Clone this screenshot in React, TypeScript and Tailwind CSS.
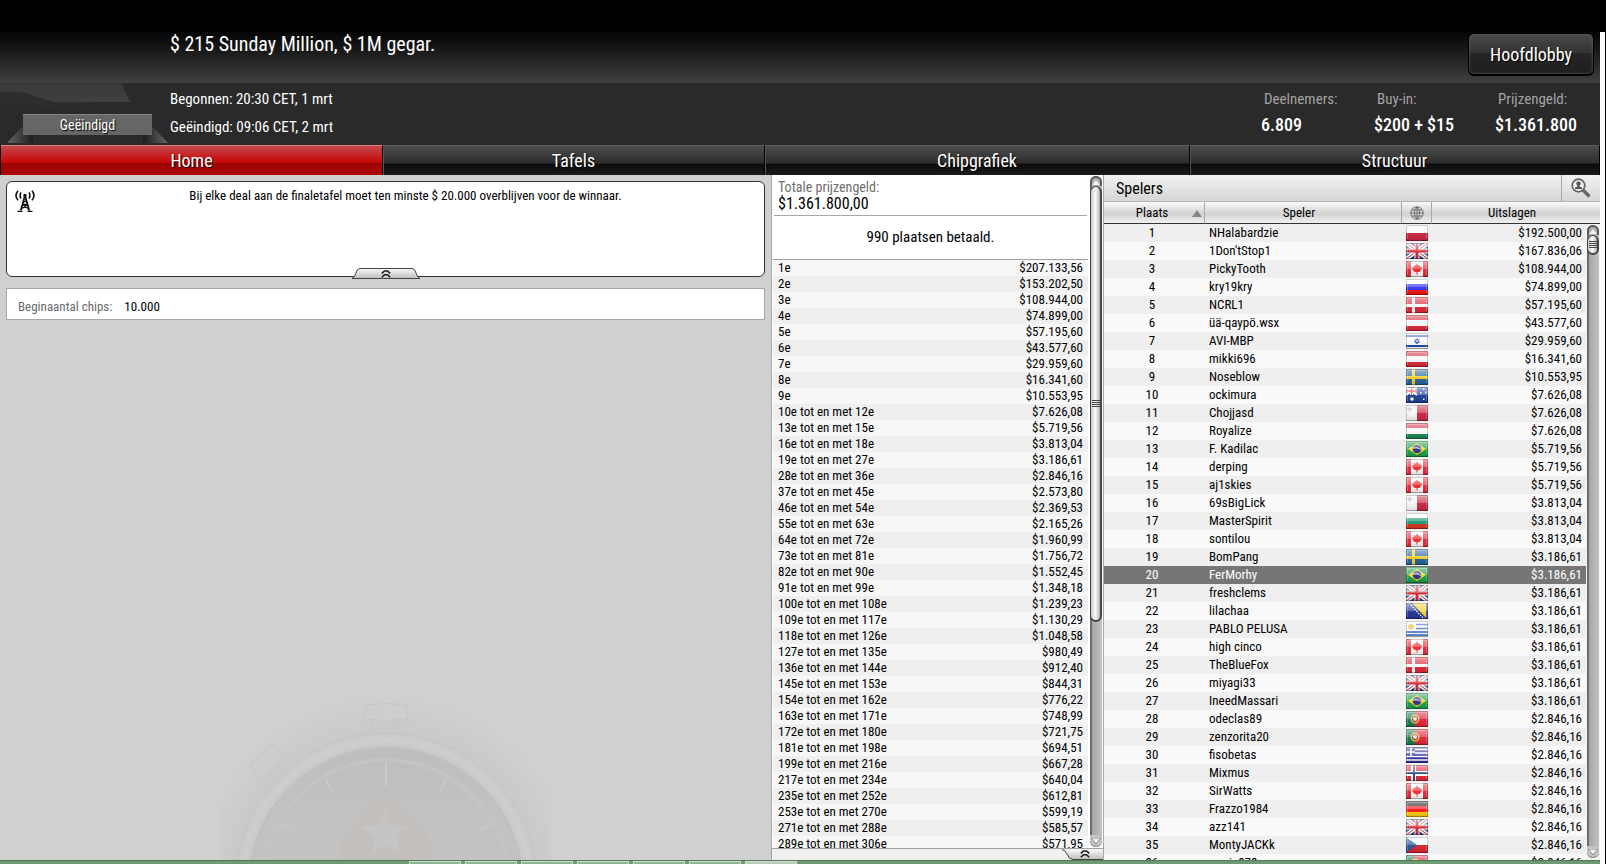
import type { ReactNode } from "react";

const prizes: [string, string][] = [
  ["1e", "207.133,56"], ["2e", "153.202,50"], ["3e", "108.944,00"], ["4e", "74.899,00"],
  ["5e", "57.195,60"], ["6e", "43.577,60"], ["7e", "29.959,60"], ["8e", "16.341,60"],
  ["9e", "10.553,95"], ["10e tot en met 12e", "7.626,08"], ["13e tot en met 15e", "5.719,56"],
  ["16e tot en met 18e", "3.813,04"], ["19e tot en met 27e", "3.186,61"],
  ["28e tot en met 36e", "2.846,16"], ["37e tot en met 45e", "2.573,80"],
  ["46e tot en met 54e", "2.369,53"], ["55e tot en met 63e", "2.165,26"],
  ["64e tot en met 72e", "1.960,99"], ["73e tot en met 81e", "1.756,72"],
  ["82e tot en met 90e", "1.552,45"], ["91e tot en met 99e", "1.348,18"],
  ["100e tot en met 108e", "1.239,23"], ["109e tot en met 117e", "1.130,29"],
  ["118e tot en met 126e", "1.048,58"], ["127e tot en met 135e", "980,49"],
  ["136e tot en met 144e", "912,40"], ["145e tot en met 153e", "844,31"],
  ["154e tot en met 162e", "776,22"], ["163e tot en met 171e", "748,99"],
  ["172e tot en met 180e", "721,75"], ["181e tot en met 198e", "694,51"],
  ["199e tot en met 216e", "667,28"], ["217e tot en met 234e", "640,04"],
  ["235e tot en met 252e", "612,81"], ["253e tot en met 270e", "599,19"],
  ["271e tot en met 288e", "585,57"], ["289e tot en met 306e", "571,95"],
];

const players: [string, string, string][] = [
  ["NHalabardzie", "pl", "192.500,00"], ["1Don'tStop1", "gb", "167.836,06"],
  ["PickyTooth", "ca", "108.944,00"], ["kry19kry", "ru", "74.899,00"],
  ["NCRL1", "dk", "57.195,60"], ["üä-qaypö.wsx", "at", "43.577,60"],
  ["AVI-MBP", "il", "29.959,60"], ["mikki696", "at", "16.341,60"],
  ["Noseblow", "se", "10.553,95"], ["ockimura", "au", "7.626,08"],
  ["Chojjasd", "mt", "7.626,08"], ["Royalize", "hu", "7.626,08"],
  ["F. Kadilac", "br", "5.719,56"], ["derping", "ca", "5.719,56"],
  ["aj1skies", "ca", "5.719,56"], ["69sBigLick", "mt", "3.813,04"],
  ["MasterSpirit", "bg", "3.813,04"], ["sontilou", "ca", "3.813,04"],
  ["BomPang", "se", "3.186,61"], ["FerMorhy", "br", "3.186,61"],
  ["freshclems", "gb", "3.186,61"], ["lilachaa", "ba", "3.186,61"],
  ["PABLO PELUSA", "uy", "3.186,61"], ["high cinco", "ca", "3.186,61"],
  ["TheBlueFox", "dk", "3.186,61"], ["miyagi33", "gb", "3.186,61"],
  ["IneedMassari", "br", "3.186,61"], ["odeclas89", "pt", "2.846,16"],
  ["zenzorita20", "pt", "2.846,16"], ["fisobetas", "gr", "2.846,16"],
  ["Mixmus", "no", "2.846,16"], ["SirWatts", "ca", "2.846,16"],
  ["Frazzo1984", "de", "2.846,16"], ["azz141", "gb", "2.846,16"],
  ["MontyJACKk", "cz", "2.846,16"], ["maria878", "pt", "2.846,16"],
];

const full = (c: string) => <rect width="22" height="16" fill={c} />;
const band = (y: number, h: number, c: string) => <rect y={y} width="22" height={h} fill={c} />;
const col = (x: number, w: number, c: string) => <rect x={x} width={w} height="16" fill={c} />;

const flags: Record<string, ReactNode> = {
  pl: <>{full("#f4f4f4")}{band(8, 8, "#c8203c")}</>,
  gb: (
    <>
      {full("#1d3f8f")}
      <path d="M0 0L22 16M22 0L0 16" stroke="#fff" strokeWidth="4" />
      <path d="M0 0L22 16M22 0L0 16" stroke="#d22a35" strokeWidth="1" />
      <path d="M11 0V16M0 8H22" stroke="#fff" strokeWidth="5" />
      <path d="M11 0V16M0 8H22" stroke="#cc2230" strokeWidth="3" />
    </>
  ),
  ca: (
    <>
      {full("#f6f6f6")}{col(0, 5, "#e02635")}{col(17, 5, "#e02635")}
      <path d="M11 2.500L12.500 4.500L14 4.500L14.500 6L16.500 6.500L15.500 8.500L13.500 11H11.500V13.500H10.500V11H8.500L6.500 8.500L5.500 6.500L7.500 6L8 4.500L9.500 4.500z" fill="#f0252a" />
    </>
  ),
  ru: <>{full("#fff")}{band(5, 6, "#3030f0")}{band(11, 5, "#f01010")}</>,
  dk: <>{full("#dd2233")}{col(6, 3, "#fff")}{band(7, 3, "#fff")}</>,
  at: <>{full("#d82435")}{band(5, 6, "#f8f8f8")}</>,
  il: (
    <>
      {full("#fafafa")}{band(2, 2, "#3a66cc")}{band(12, 2, "#1744a8")}
      <path d="M11 5.500l2.200 3.800H8.800zM11 11L8.800 6.900h4.400z" fill="none" stroke="#2a50b8" strokeWidth=".9" />
    </>
  ),
  se: <>{full("#1f5f98")}{col(6, 3, "#f7c81c")}{band(7, 3, "#f7c81c")}</>,
  au: (
    <>
      {full("#1a3c90")}
      <path d="M0 0L11 8M11 0L0 8" stroke="#fff" strokeWidth="2" />
      <path d="M5.500 0V8M0 4H11" stroke="#fff" strokeWidth="3" />
      <path d="M5.500 0V8M0 4H11" stroke="#d22a35" strokeWidth="1.500" />
      <circle cx="6" cy="12" r="1.800" fill="#fff" />
      <path d="M17 1.500h1.500v1.500H17zM14 5h1.500v1.500H14zM19 4.500h1.500V6H19zM17 11.500h1.500V13H17z" fill="#fff" />
    </>
  ),
  mt: (
    <>
      {full("#f4f4f4")}{col(11, 11, "#c8203c")}
      <path d="M3.500 1.500v5M1 4h5" stroke="#b9a0a0" strokeWidth="1.300" />
    </>
  ),
  hu: <>{full("#f8f8f8")}{band(0, 5, "#d52b3c")}{band(11, 5, "#178050")}</>,
  br: (
    <>
      {full("#159a45")}
      <path d="M11 2l9 6-9 6-9-6z" fill="#f5d818" />
      <circle cx="11" cy="8" r="4.300" fill="#2c2f86" />
      <path d="M7 7q4-1.500 8 1.500" fill="none" stroke="#dfe6f2" strokeWidth=".8" />
    </>
  ),
  bg: <>{full("#f8f8f8")}{band(5, 6, "#1f9a78")}{band(11, 5, "#d5301f")}</>,
  ba: (
    <>
      {full("#1f3292")}
      <path d="M6 0H20V15z" fill="#f5d030" />
      <path d="M3 0L18 16" stroke="#fff" strokeWidth="1.300" strokeDasharray="1.500 1.200" />
    </>
  ),
  uy: (
    <>
      {full("#fafafa")}
      <path d="M10 3.500H22M10 7.500H22M0 11H22M0 14H22" stroke="#2b62c4" strokeWidth="1.700" />
      <circle cx="5" cy="5.500" r="3" fill="#e3bd4c" />
    </>
  ),
  pt: (
    <>
      {full("#de2035")}{col(0, 9, "#12754a")}
      <circle cx="9" cy="8" r="3.800" fill="none" stroke="#e6c840" strokeWidth="1.300" />
      <rect x="7" y="6" width="4" height="4" fill="#f4f4f4" stroke="#cf3b3b" strokeWidth=".7" />
    </>
  ),
  gr: (
    <>
      {full("#2d2d9a")}
      <path d="M9 2.500H22M9 6H22M0 9.500H22M0 13H22" stroke="#fff" strokeWidth="1.500" />
      <rect width="9" height="8" fill="#2d2d9a" />
      <path d="M5 0V9M0 5H9" stroke="#fff" strokeWidth="1.600" />
    </>
  ),
  no: (
    <>
      {full("#e02435")}{col(5, 5, "#fff")}{band(6, 5, "#fff")}{col(7, 2, "#27457e")}{band(7, 2, "#27457e")}
    </>
  ),
  de: <>{full("#fa1414")}{band(0, 5, "#161616")}{band(11, 5, "#f6c800")}</>,
  cz: <>{full("#fafafa")}{band(8, 8, "#d8202c")}<path d="M0 0L11 8L0 16z" fill="#20508f" /></>,
};

function Flag({ code }: { code: string }) {
  return (
    <svg viewBox="0 0 22 16" className="mx-auto block h-4 w-[22px]" aria-hidden="true">
      {flags[code]}
      <rect width="22" height="16" fill="url(#gloss)" />
      <path d="M.5 15.500V.5H21.500V15.500" fill="none" stroke="#000" strokeOpacity=".18" />
      <path d="M0 15.500H22" stroke="#000" strokeOpacity=".3" />
      <path d="M1.500 14V1.500H20.500V14" fill="none" stroke="#fff" strokeOpacity=".22" />
    </svg>
  );
}

function Chevrons() {
  return (
    <svg viewBox="0 0 10 8" className="block h-2 w-[10px]" fill="none" stroke="#1a1a1a" strokeWidth="1.500" aria-hidden="true">
      <path d="M.8 3.400L3.500 1h3L9.200 3.400M.8 7.200L3.500 4.800h3L9.200 7.200" />
    </svg>
  );
}

function ScrollBar({ size }: { size: "long" | "short" }) {
  return (
    <div className="flex h-full w-3 flex-col rounded-full border-l-2 border-[#6b6b6b] bg-gradient-to-r from-[#a6a6a6] to-[#c2c2c2]" aria-hidden="true">
      <div className="-ml-[2px] flex h-[10px] items-center justify-center rounded-t-full border-2 border-b-0 border-[#5b5b5b] bg-[#b0b0b0]">
        <svg viewBox="0 0 8 5" className="h-[5px] w-2"><path d="M0 5L4 0L8 5z" fill="#f2f2f2" /></svg>
      </div>
      <div
        className={
          "-ml-[2px] flex flex-col items-center justify-center gap-px rounded-full border border-r-2 border-b-2 border-[#454545] bg-gradient-to-r from-[#c9c9c9] via-[#fafafa] to-[#b4b4b4] " +
          (size === "long" ? "h-[65%]" : "h-5")
        }
      >
        <i className="h-px w-2 bg-[#444]" />
        <i className="h-px w-2 bg-[#444]" />
        <i className="h-px w-2 bg-[#444]" />
        <i className="h-px w-2 bg-[#444]" />
      </div>
      <div className="-ml-[2px] mt-auto flex h-3 items-center justify-center rounded-b-full border-b border-[#8a8a8a] bg-[#c4c4c4]">
        <svg viewBox="0 0 10 6" className="h-[6px] w-[10px]"><path d="M0 0L5 6L10 0z" fill="#eee" stroke="#777" strokeWidth=".8" /></svg>
      </div>
    </div>
  );
}

function Ribbon() {
  return (
    <div className="relative flex h-full w-[170px] shrink-0 items-start pl-[23px] pt-[31px]">
      <svg viewBox="0 0 170 62" className="absolute left-0 top-0 h-[62px] w-[170px]" aria-hidden="true">
        <defs>
          <linearGradient id="blob" x1="0" y1="0" x2="0" y2="1">
            <stop offset="0" stopColor="#383838" />
            <stop offset="1" stopColor="#404040" />
          </linearGradient>
          <linearGradient id="foldL" x1="0" y1="0" x2="1" y2="0">
            <stop offset="0" stopColor="#666" />
            <stop offset="1" stopColor="#1c1c1c" />
          </linearGradient>
          <linearGradient id="foldR" x1="1" y1="0" x2="0" y2="0">
            <stop offset="0" stopColor="#666" />
            <stop offset="1" stopColor="#1c1c1c" />
          </linearGradient>
        </defs>
        <path d="M0 0H122Q125 12 131 19H54L34 13Q28 10 20 9H0z" fill="url(#blob)" />
        <path d="M0 9H20Q34 14 54 19H96Q60 24 30 22T0 24z" fill="#2e2e2e" />
        <path d="M7 60L23 43H33V60z" fill="url(#foldL)" />
        <path d="M168 60L152 43H143V60z" fill="url(#foldR)" />
      </svg>
      <div className="relative flex h-[21px] w-[129px] items-center justify-center border-t border-[#858585] bg-[#666] text-[14px] text-white [text-shadow:1px_1px_1px_#000]">
        Geëindigd
      </div>
    </div>
  );
}

function Stopwatch() {
  const ticks = [-60, -30, 0, 30, 60];
  return (
    <svg viewBox="220 690 330 170" className="h-[170px] w-[330px]" aria-hidden="true">
      <defs>
        <radialGradient id="halo">
          <stop offset=".78" stopColor="#c9c9c9" />
          <stop offset="1" stopColor="#d0d0d0" />
        </radialGradient>
        <linearGradient id="face" x1="0" y1="0" x2="0" y2="1">
          <stop offset="0" stopColor="#bdbdbd" />
          <stop offset=".25" stopColor="#c2c2c2" />
        </linearGradient>
      </defs>
      <circle cx="385" cy="884" r="190" fill="url(#halo)" />
      <path d="M371 720h27v14h-27z" fill="#cacaca" stroke="#c5c5c5" />
      <path d="M364 705q21-3 42 0v14q-21 3-42 0z" fill="#cecece" stroke="#c6c6c6" />
      <path d="M263 772l19-18 12 14-22 20z" fill="#cacaca" />
      <path d="M249 767q8-14 24-23l10 13-22 21z" fill="#cdcdcd" stroke="#c6c6c6" />
      <circle cx="385" cy="884" r="151" fill="#cacaca" stroke="#c4c4c4" />
      <circle cx="385" cy="884" r="144" fill="none" stroke="#cdcdcd" strokeWidth="6" />
      <circle cx="385" cy="884" r="136" fill="url(#face)" stroke="#c0c0c0" strokeWidth="3" />
      <circle cx="385" cy="884" r="124" fill="none" stroke="#c4c4c4" strokeWidth="4" />
      {ticks.map((a) => (
        <path key={a} d={a === 0 ? "M385 763V787" : "M385 763V777"} transform={`rotate(${a} 385 884)`} stroke="#c9c9c9" strokeWidth="2" />
      ))}
      <path d="M385 787C395 806 431 825 431 854C431 880 410 890 385 880C360 890 339 880 339 854C339 825 375 806 385 787z" fill="#c2bfbd" />
      <path d="M385 809l6 17h19l-15 12 6 18-16-11-16 11 6-18-15-12h19z" fill="#c4c4c4" />
    </svg>
  );
}

const tabClass =
  "border-t border-t-[#5c5c5c] border-r border-r-black bg-[linear-gradient(to_bottom,#4c4c4c_0%,#2c2c2c_60%,#0a0a0a_61%,#1c1c1c_100%)] pb-px text-[18px] leading-[27px] text-white shadow-[inset_1px_0_0_#555] [text-shadow:1px_1px_1px_#000]";

export default function App() {
  return (
    <div className="flex h-screen flex-col overflow-hidden bg-black font-['Roboto_Condensed','Liberation_Sans',sans-serif] text-[13px] text-black">
      <svg className="absolute size-0" aria-hidden="true">
        <linearGradient id="gloss" x1="0" y1="0" x2="0" y2="1">
          <stop offset="0" stopColor="#fff" stopOpacity=".55" />
          <stop offset=".48" stopColor="#fff" stopOpacity=".3" />
          <stop offset=".52" stopColor="#fff" stopOpacity=".05" />
          <stop offset="1" stopColor="#000" stopOpacity=".12" />
        </linearGradient>
      </svg>
      <div className="h-8 shrink-0 bg-black" />
      <div className="flex min-h-0 flex-1 border-r border-black bg-white pr-[5px]">
        <div className="flex min-w-0 flex-1 flex-col">
          <header className="shrink-0 bg-[#2a2a2a] text-white">
            <div className="flex h-[51px] items-start justify-between bg-gradient-to-b from-[#060606] to-[#414141] pl-[170px] pr-[6px]">
              <h1 className="text-[20px] leading-6">$ 215 Sunday Million, $ 1M gegar.</h1>
              <button className="mt-px h-[43px] w-[126px] rounded-md border border-b-2 border-black bg-[linear-gradient(to_bottom,#4a4a4a_0%,#333_48%,#262626_49%,#1e1e1e_100%)] text-[18px] shadow-[inset_0_0_3px_#666] [text-shadow:1px_1px_1px_#000]">
                Hoofdlobby
              </button>
            </div>
            <div className="flex h-[62px]">
              <Ribbon />
              <div className="flex-1 pt-[2px] text-[15px] leading-7">
                <p>Begonnen: 20:30 CET, 1 mrt</p>
                <p>Geëindigd: 09:06 CET, 2 mrt</p>
              </div>
              <dl className="grid grid-cols-[113px_121px_105px] pt-[3px] [&_dt]:pl-[3px] [&_dt]:text-[15px] [&_dt]:leading-[26px] [&_dt]:text-[#a3a3a3] [&_dd]:text-[18px] [&_dd]:font-medium [&_dd]:leading-[26px]">
                <div><dt>Deelnemers:</dt><dd>6.809</dd></div>
                <div><dt>Buy-in:</dt><dd>$200 + $15</dd></div>
                <div><dt>Prijzengeld:</dt><dd>$1.361.800</dd></div>
              </dl>
            </div>
          </header>

          <nav className="grid h-[30px] shrink-0 grid-cols-[383fr_382fr_425fr_410fr] bg-black">
            <button className="ml-px border-r border-t border-r-black border-t-[#e08080] bg-[linear-gradient(to_bottom,#c4484c_0%,#c80404_59%,#9a0404_60%,#b00404_100%)] text-[18px] leading-[28px] text-white [text-shadow:1px_1px_1px_#000]">
              Home
            </button>
            <button className={tabClass}>Tafels</button>
            <button className={tabClass}>Chipgrafiek</button>
            <button className={tabClass}>Structuur</button>
          </nav>

          <main className="grid min-h-0 flex-1 grid-cols-[771fr_333fr_496fr] grid-rows-[minmax(0,1fr)] bg-[#d0d0d0]">
            <section className="flex min-h-0 flex-col overflow-hidden">
              <div className="relative ml-[6px] mr-[6px] mt-[6px] h-24 shrink-0 rounded-md border border-[#333] bg-white">
                <svg viewBox="0 0 20 22" className="absolute left-2 top-2 h-[22px] w-5" fill="none" stroke="#111" aria-hidden="true">
                  <path d="M10 5.500L5.800 20.500M10 5.500L14.200 20.500" strokeWidth="1.800" />
                  <path d="M8.500 11.500H11.500M7.500 14.500L13 18.500M12.500 14.500L7 18.500M8 14.500h4M2.500 21.300h5M12.500 21.300h5" strokeWidth="1.300" />
                  <circle cx="10" cy="5.500" r="1.700" fill="#111" stroke="none" />
                  <path d="M6 2.500q-1.800 3 0 6M14 2.500q1.800 3 0 6M3 .8q-4 4.700 0 9.400M17 .8q4 4.700 0 9.400" strokeWidth="1.600" />
                </svg>
                <p className="pl-10 text-center leading-[28px]">
                  Bij elke deal aan de finaletafel moet ten minste $ 20.000 overblijven voor de winnaar.
                </p>
                <button aria-label="Inklappen" className="absolute -bottom-[3px] left-1/2 flex h-[11px] w-[70px] -translate-x-1/2 items-center justify-center">
                  <svg viewBox="0 0 70 11" className="absolute inset-0 h-[11px] w-[70px]" aria-hidden="true">
                    <path d="M1 10.500Q4 9 5 5Q6 .5 9 .5H61Q64 .5 65 5Q66 9 69 10.500z" fill="url(#handle)" stroke="#444" />
                    <linearGradient id="handle" x1="0" y1="0" x2="0" y2="1">
                      <stop offset="0" stopColor="#fafafa" />
                      <stop offset="1" stopColor="#bdbdbd" />
                    </linearGradient>
                  </svg>
                  <span className="relative"><Chevrons /></span>
                </button>
              </div>
              <div className="mx-[6px] mt-[11px] flex h-8 shrink-0 items-center gap-3 border border-[#a8a8a8] bg-white pl-[11px] pt-[6px]">
                <span className="text-[#6a6a6a]">Beginaantal chips:</span>
                <span>10.000</span>
              </div>
              <div className="flex min-h-0 flex-1 items-end justify-center">
                <Stopwatch />
              </div>
            </section>

            <section className="flex min-h-0 flex-col border-x border-[#a8a8a8] bg-white">
              <div className="flex min-h-0 flex-1 border-b border-[#a0a0a0]">
                <div className="min-w-0 flex-1 overflow-hidden px-px">
                  <div className="ml-px mr-px h-[41px] border-b border-[#a8a8a8] pl-1 pt-[3px]">
                    <p className="text-[14px] leading-[18px] text-[#6e6e6e]">Totale prijzengeld:</p>
                    <p className="text-[16px] leading-4">$1.361.800,00</p>
                  </div>
                  <p className="h-11 border-b border-[#a0a0a0] text-center text-[15px] leading-[42px]">990 plaatsen betaald.</p>
                  <table className="w-full">
                    <tbody>
                      {prizes.map(([place, amount]) => (
                        <tr key={place} className="h-4 leading-4 odd:bg-[#f7f7f7] even:bg-[#efefef]">
                          <td className="p-0 pl-[5px]">{place}</td>
                          <td className="p-0 pr-[5px] text-right">${amount}</td>
                        </tr>
                      ))}
                    </tbody>
                  </table>
                </div>
                <div className="w-[14px] shrink-0 py-px pl-px"><ScrollBar size="long" /></div>
              </div>
              <div className="flex h-[11px] shrink-0 justify-end bg-[#f0f0f0]">
                <button aria-label="Uitklappen" className="relative flex h-[11px] w-[41px] items-start justify-center">
                  <svg viewBox="0 0 41 11" className="absolute inset-0 h-[11px] w-[41px]" aria-hidden="true">
                    <path d="M0 .5Q3 1 5 5Q7 10.500 11 10.500H41V.5z" fill="url(#handle)" />
                    <path d="M0 .5Q3 1 5 5Q7 10.500 11 10.500H41" fill="none" stroke="#444" />
                  </svg>
                  <span className="relative pl-1 pt-px"><Chevrons /></span>
                </button>
              </div>
            </section>

            <section className="relative flex min-h-0 flex-col overflow-hidden bg-[#f9f9f9]">
              <div className="flex h-[27px] shrink-0 border-b border-[#b5b5b5] bg-gradient-to-b from-[#f3f3f3] to-[#d6d6d6]">
                <h2 className="flex-1 pl-3 text-[16px] leading-[27px]">Spelers</h2>
                <button aria-label="Speler zoeken" className="flex w-[39px] items-center justify-center border-l border-[#a8a8a8]">
                  <svg viewBox="0 0 20 20" className="size-5" aria-hidden="true">
                    <circle cx="7.500" cy="7.500" r="6.300" fill="#eee" stroke="#666" strokeWidth="1.700" />
                    <circle cx="7.500" cy="5.600" r="2.200" fill="#555" />
                    <path d="M6.500 6h2v2.500l2.500 1v1.500H4V9.500l2.500-1z" fill="#555" />
                    <path d="M12 12L18.500 18.500" stroke="#666" strokeWidth="3.200" />
                  </svg>
                </button>
              </div>
              <table className="w-full table-fixed border-separate border-spacing-0">
                <colgroup>
                  <col className="w-[101px]" />
                  <col />
                  <col className="w-[30px]" />
                  <col className="w-[168px]" />
                </colgroup>
                <thead>
                  <tr className="h-[22px] [&>th]:border-b [&>th]:border-b-[#333] [&>th]:bg-[linear-gradient(to_bottom,#fafafa,#d2d2d2_55%,#f0f0f0)] [&>th]:p-0 [&>th]:font-normal [&>th]:leading-[21px]">
                    <th className="relative border-r border-[#a8a8a8]">
                      <span className="pr-1">Plaats</span>
                      <svg viewBox="0 0 10 7" className="absolute right-[2px] top-2 h-[7px] w-[10px]" aria-hidden="true"><path d="M0 7L5 0L10 7z" fill="#858585" /></svg>
                    </th>
                    <th className="border-r border-[#a8a8a8] pr-2!">Speler</th>
                    <th aria-label="Land" className="border-r border-[#a8a8a8]">
                      <svg viewBox="0 0 14 14" className="mx-auto size-[14px]" fill="none" stroke="#666" aria-hidden="true">
                        <circle cx="7" cy="7" r="6.200" fill="#ddd" />
                        <path d="M7 1V13M1 7H13M2 4H12M2 10H12M7 1Q1.500 7 7 13M7 1Q12.500 7 7 13" strokeWidth=".9" />
                      </svg>
                    </th>
                    <th className="pr-2!">Uitslagen</th>
                  </tr>
                </thead>
                <tbody>
                  {players.map(([name, flag, amount], i) => (
                    <tr
                      key={name}
                      className={
                        "h-[18px] leading-[18px] " +
                        (i === 19 ? "bg-[#767676] text-white" : i % 2 === 0 ? "bg-[#efefef]" : "bg-[#f9f9f9]")
                      }
                    >
                      <td className="p-0 pr-[5px] text-center">{i + 1}</td>
                      <td className="p-0 pl-1">{name}</td>
                      <td className="p-0"><Flag code={flag} /></td>
                      <td className="p-0 pr-[18px] text-right">${amount}</td>
                    </tr>
                  ))}
                </tbody>
              </table>
              <div className="absolute bottom-0 right-0 top-[49px] w-[14px] bg-[#f3f3f3] pb-[2px] pt-px pl-px"><ScrollBar size="short" /></div>
            </section>
          </main>

          <footer className="flex h-1 shrink-0 gap-1 border-t border-[#54785a] bg-[#6d9a72] pl-[409px]">
            {[0, 1, 2, 3, 4, 5, 6].map((n) => (
              <span key={n} className={"w-[52px] border-x border-t border-[#cfe0d0] " + (n === 6 ? "bg-[#b9c9ba]" : "bg-[#8fb494]")} />
            ))}
          </footer>
        </div>
      </div>
    </div>
  );
}
